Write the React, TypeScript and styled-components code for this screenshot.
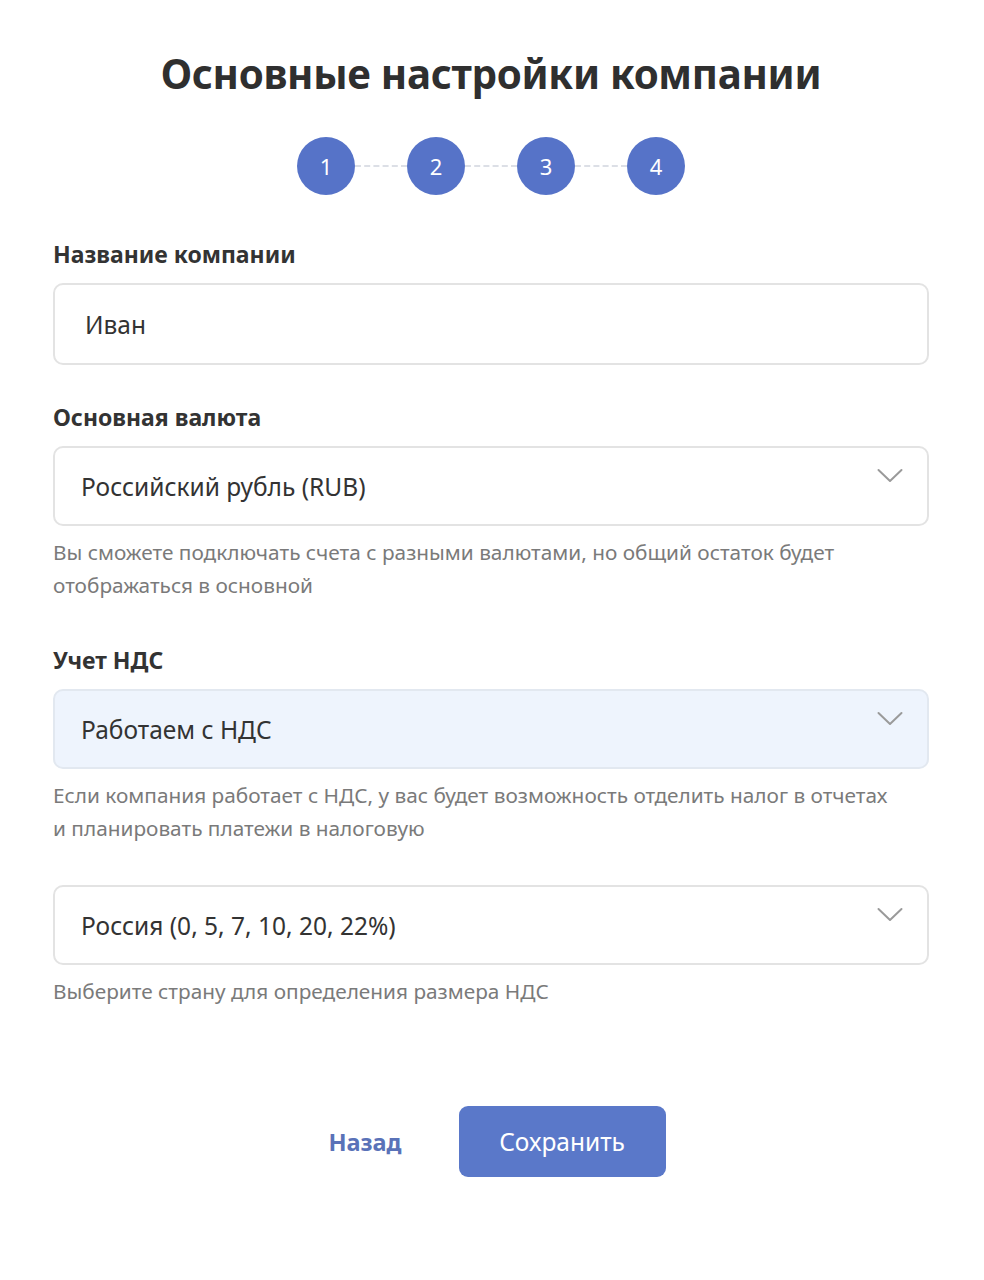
import styled, { createGlobalStyle } from 'styled-components'

const GlobalStyle = createGlobalStyle`
  body {
    margin: 0;
    background: #fff;
    font-family: "Noto Sans", "Open Sans", sans-serif;
    color: #333;
  }
`;

const Page = styled.div`
  width: 984px;
  min-height: 1280px;
  box-sizing: border-box;
  padding: 47px 55px 0 53px;
`;

const Title = styled.h1`
  margin: 0;
  text-align: center;
  font-size: 40.3px;
  font-weight: 700;
  line-height: 54px;
  color: #2f2f2f;
  letter-spacing: -0.3px;
`;

const Steps = styled.div`
  display: flex;
  justify-content: center;
  align-items: center;
  margin: 36px 0 44px;
`;

const Step = styled.div`
  display: flex;
  align-items: center;
`;

const StepCircle = styled.div`
  width: 58px;
  height: 58px;
  border-radius: 50%;
  background: #5673c8;
  color: #fff;
  display: flex;
  align-items: center;
  justify-content: center;
  font-size: 22px;
`;

const StepLine = styled.div`
  width: 52px;
  border-top: 2px dashed #dcdfe6;
`;

const Field = styled.div<{ $space?: number }>`
  display: flex;
  flex-direction: column;
  margin-bottom: ${p => p.$space ?? 37}px;
`;

const Label = styled.div`
  font-size: 23px;
  font-weight: 700;
  color: #333;
  line-height: 30px;
  margin-bottom: 14px;
`;

const InputBox = styled.div`
  height: 82px;
  box-sizing: border-box;
  border: 2px solid #e3e3e3;
  border-radius: 10px;
  padding: 0 30px;
  display: flex;
  align-items: center;
  font-size: 24.5px;
  color: #333;
`;

const SelectBox = styled.div<{ $active?: boolean }>`
  height: 80px;
  box-sizing: border-box;
  border: 2px solid ${p => (p.$active ? '#e2e8f0' : '#e3e3e3')};
  background: ${p => (p.$active ? '#eef4fd' : '#fff')};
  border-radius: 10px;
  padding: 0 24px 0 26px;
  display: flex;
  align-items: center;
  justify-content: space-between;
  font-size: 24.5px;
  color: #333;
`;

const Chevron = styled.svg`
  width: 26px;
  height: 16px;
  margin-top: -20px;
`;

const Hint = styled.div`
  margin-top: 10px;
  font-size: 20.8px;
  line-height: 33px;
  color: #7a7a7a;
`;

const Actions = styled.div`
  display: flex;
  justify-content: center;
  align-items: center;
  gap: 57px;
  margin-top: 98px;
  padding-left: 12px;
`;

const BackButton = styled.button`
  border: none;
  background: none;
  padding: 0;
  font-family: inherit;
  font-size: 23.5px;
  font-weight: 700;
  color: #5a72b8;
  cursor: pointer;
`;

const SaveButton = styled.button`
  border: none;
  width: 207px;
  height: 71px;
  border-radius: 9px;
  background: #5a78c9;
  color: #fff;
  font-family: inherit;
  font-size: 24.5px;
  cursor: pointer;
`;

function ArrowDown() {
  return (
    <Chevron viewBox="0 0 26 16" fill="none">
      <path d="M1.5 2 L13 13 L24.5 2" stroke="#9a9a9a" strokeWidth="2" strokeLinecap="round" strokeLinejoin="round" />
    </Chevron>
  )
}

export default function App() {
  const steps = [1, 2, 3, 4]
  return (
    <>
      <GlobalStyle />
      <Page>
        <Title>Основные настройки компании</Title>

        <Steps>
          {steps.map((n, i) => (
            <Step key={n}>
              {i > 0 && <StepLine />}
              <StepCircle>{n}</StepCircle>
            </Step>
          ))}
        </Steps>

        <Field>
          <Label>Название компании</Label>
          <InputBox>Иван</InputBox>
        </Field>

        <Field $space={43}>
          <Label>Основная валюта</Label>
          <SelectBox>
            Российский рубль (RUB)
            <ArrowDown />
          </SelectBox>
          <Hint>
            Вы сможете подключать счета с разными валютами, но общий остаток будет
            <br />
            отображаться в основной
          </Hint>
        </Field>

        <Field $space={40}>
          <Label>Учет НДС</Label>
          <SelectBox $active>
            Работаем с НДС
            <ArrowDown />
          </SelectBox>
          <Hint>
            Если компания работает с НДС, у вас будет возможность отделить налог в отчетах
            <br />
            и планировать платежи в налоговую
          </Hint>
        </Field>

        <Field $space={0}>
          <SelectBox>
            Россия (0, 5, 7, 10, 20, 22%)
            <ArrowDown />
          </SelectBox>
          <Hint>Выберите страну для определения размера НДС</Hint>
        </Field>

        <Actions>
          <BackButton>Назад</BackButton>
          <SaveButton>Сохранить</SaveButton>
        </Actions>
      </Page>
    </>
  )
}
